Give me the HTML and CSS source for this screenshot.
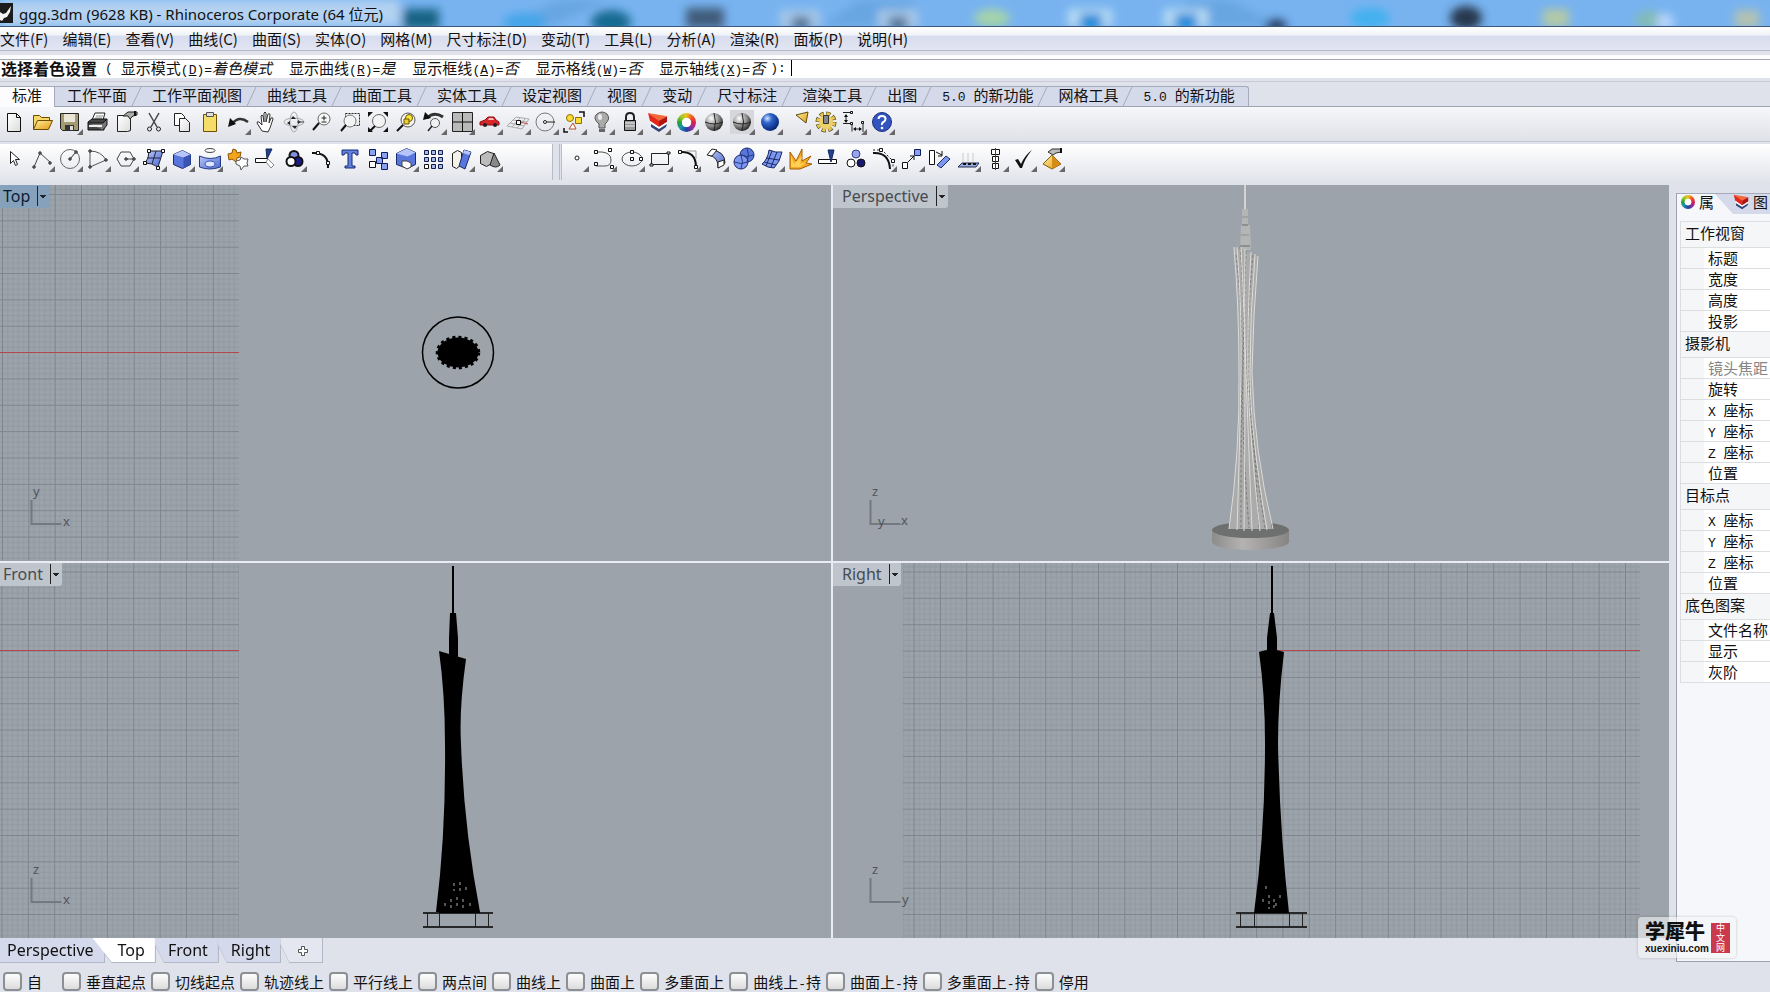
FILE: index.html
```
<!DOCTYPE html>
<html lang="zh-CN">

<head>
    <meta charset="UTF-8">
    <meta name="viewport" content="width=device-width, initial-scale=1.0">
    <title>ggg.3dm (9628 KB) - Rhinoceros Corporate (64 位元)</title>
    <link rel="stylesheet" href="styles.css">
</head>

<body>
    <!-- shared gradients and patterns -->
    <svg class="defs" width="0" height="0">
        <defs>
            <radialGradient id="gray_ball" cx="0.35" cy="0.3" r="0.75"><stop offset="0" stop-color="#fff"/><stop offset="0.5" stop-color="#999"/><stop offset="1" stop-color="#222"/></radialGradient>
            <radialGradient id="blue_ball" cx="0.35" cy="0.3" r="0.75"><stop offset="0" stop-color="#d5e6ff"/><stop offset="0.35" stop-color="#2f65cc"/><stop offset="1" stop-color="#03206f"/></radialGradient>
            <linearGradient id="blue" x1="0" y1="0" x2="1" y2="1"><stop offset="0" stop-color="#b9c8fa"/><stop offset="1" stop-color="#4a66cc"/></linearGradient>
            <linearGradient id="gold" x1="0" y1="0" x2="1" y2="1"><stop offset="0" stop-color="#fff0a0"/><stop offset="1" stop-color="#e09a10"/></linearGradient>
            <linearGradient id="paper" x1="0" y1="0" x2="1" y2="1"><stop offset="0" stop-color="#fff"/><stop offset="1" stop-color="#dcdcdc"/></linearGradient>
            <linearGradient id="stone" x1="0" y1="0" x2="1" y2="0"><stop offset="0" stop-color="#8c8c8c"/><stop offset="0.4" stop-color="#b5b3b1"/><stop offset="1" stop-color="#868584"/></linearGradient>
            <pattern id="grid_top" x="2" y="9" width="26.35" height="26.35" patternUnits="userSpaceOnUse">
                <path d="M5.8 0v27M11 0v27M16.3 0v27M21.6 0v27M0 5.8h27M0 11h27M0 16.3h27M0 21.6h27" stroke="#919aa1" stroke-width="1"/>
                <path d="M.5 0v27M0 .5h27" stroke="#7e858d" stroke-width="1"/>
            </pattern>
            <pattern id="grid_side" x="1.5" y="8.5" width="26.35" height="26.35" patternUnits="userSpaceOnUse">
                <path d="M5.8 0v27M11 0v27M16.3 0v27M21.6 0v27M0 5.8h27M0 11h27M0 16.3h27M0 21.6h27" stroke="#919aa1" stroke-width="1"/>
                <path d="M.5 0v27M0 .5h27" stroke="#7e858d" stroke-width="1"/>
            </pattern>
            <filter id="soft"><feGaussianBlur stdDeviation="5"/></filter>
        </defs>
    </svg>

    <div id="app">
        <header id="titlebar">
            <svg class="glass" viewBox="0 0 1770 26" preserveAspectRatio="none">
                <g filter="url(#soft)">
                    <path d="M0 0h400v26H0z" fill="#b4d2f1"/>
                    <path d="M560 0h50l-60 26h-50zM860 0h60l-40 26h-60zM1180 0h50l50 26h-70z" fill="#68a6e2"/>
                    <path d="M403 9h36v20h-36z" fill="#176384"/>
                    <ellipse cx="525" cy="22" rx="22" ry="9" fill="#42a5e9"/>
                    <ellipse cx="611" cy="22" rx="20" ry="12" fill="#156a91"/>
                    <path d="M686 8h38v20h-38z" fill="#405b7a"/>
                    <path d="M780 10h40v18h-40zM878 10h40v18h-40z" fill="#a8c8e8"/>
                    <path d="M792 17h18v12h-18zM889 17h18v12h-18z" fill="#506e90"/>
                    <ellipse cx="992" cy="18" rx="18" ry="9" fill="#a5d4a8"/>
                    <path d="M1068 9h44v18h-44zM1164 9h44v18h-44z" fill="#b8dcf4"/>
                    <path d="M1080 14h22v14h-22zM1175 14h22v14h-22z" fill="#0788d8"/>
                    <ellipse cx="1276" cy="26" rx="11" ry="7" fill="#263e65"/>
                    <ellipse cx="1370" cy="18" rx="20" ry="10" fill="#43b1ef"/>
                    <ellipse cx="1466" cy="18" rx="16" ry="12" fill="#27384e"/>
                    <path d="M1543 9h26v18h-26z" fill="#b4c9a6"/>
                    <ellipse cx="1650" cy="20" rx="15" ry="9" fill="#82bcb4"/>
                    <ellipse cx="1665" cy="22" rx="9" ry="9" fill="#b8d4fc"/>
                    <path d="M1735 10h24v18h-24z" fill="#b4c2b0"/>
                </g>
            </svg>
            <svg class="logo" width="13" height="20" viewBox="0 0 13 20"><path d="M0 0h13v20H0z" fill="#1b1b1b"/><path d="M0 9l3 2 3-1 5-7-1 6-3 5-3 1-2 3-2-1z" fill="#f4f4f4"/></svg>
            <h1>ggg.3dm (9628 KB) - Rhinoceros Corporate (64 位元)</h1>
        </header>

        <nav id="menubar">
            <button>文件(F)</button>
            <button>编辑(E)</button>
            <button>查看(V)</button>
            <button>曲线(C)</button>
            <button>曲面(S)</button>
            <button>实体(O)</button>
            <button>网格(M)</button>
            <button>尺寸标注(D)</button>
            <button>变动(T)</button>
            <button>工具(L)</button>
            <button>分析(A)</button>
            <button>渲染(R)</button>
            <button>面板(P)</button>
            <button>说明(H)</button>
        </nav>

        <div id="command">
            <label for="prompt">选择着色设置</label>
            <kbd class="open">(</kbd>
            <button>显示模式<kbd>(<u>D</u>)=</kbd><i>着色模式</i></button>
            <button>显示曲线<kbd>(<u>R</u>)=</kbd><i>是</i></button>
            <button>显示框线<kbd>(<u>A</u>)=</kbd><i>否</i></button>
            <button>显示格线<kbd>(<u>W</u>)=</kbd><i>否</i></button>
            <button>显示轴线<kbd>(<u>X</u>)=</kbd><i>否</i></button>
            <kbd class="close">):</kbd>
            <span class="caret"></span>
            <input id="prompt" type="text">
        </div>

        <nav id="tool_tabs">
            <button class="active">标准</button>
            <button>工作平面</button>
            <button>工作平面视图</button>
            <button>曲线工具</button>
            <button>曲面工具</button>
            <button>实体工具</button>
            <button>设定视图</button>
            <button>视图</button>
            <button>变动</button>
            <button>尺寸标注</button>
            <button>渲染工具</button>
            <button>出图</button>
            <button><kbd>5.0 </kbd>的新功能</button>
            <button>网格工具</button>
            <button><kbd>5.0 </kbd>的新功能</button>
        </nav>

        <div id="standard_bar" class="toolbar">
            <button aria-label="新建"><svg viewBox="0 0 24 24"><path d="M5.500 3.500h9l4 4v14h-13z" fill="url(#paper)" stroke="#111"/><path d="M14.500 3.500v4h4" fill="none" stroke="#111"/></svg></button>
            <button aria-label="打开"><svg viewBox="0 0 24 24"><path d="M3.500 19.500v-14h6l2 2h8v3" fill="#f7d766" stroke="#6b4c00"/><path d="M3.500 19.500l4-9h15l-4 9z" fill="url(#gold)" stroke="#6b4c00"/></svg></button>
            <button class="drop" aria-label="保存"><svg viewBox="0 0 24 24"><path d="M2.500 3.500h18v17h-16l-2-2z" fill="#a39972" stroke="#222"/><path d="M6 4h11v8H6z" fill="#e9e6d8"/><path d="M7 15h9v6H7z" fill="#333"/><path d="M12 16h3v4h-3z" fill="#ddd"/></svg></button>
            <button aria-label="打印"><svg viewBox="0 0 24 24"><path d="M6 10l3-7h10l-2 7z" fill="#fff" stroke="#222"/><path d="M10 6h7M9 8h7" stroke="#888"/><path d="M2 12l4-3h15l-3 4v7H2z" fill="#444" stroke="#111"/><path d="M2 13h15l4-4v6l-4 5" fill="#777" stroke="#111"/><path d="M3 16h13" stroke="#eee" stroke-width="2"/></svg></button>
            <button aria-label="文件属性"><svg viewBox="0 0 24 24"><path d="M3.500 5.500h13v15l-3 1h-10z" fill="url(#paper)" stroke="#222"/><path d="M9 6l5-4h9v3l-4 1-3 3-2-3z" fill="#aaa" stroke="#222"/><path d="M21 1v5" stroke="#111" stroke-width="2"/></svg></button>
            <button aria-label="剪切"><svg viewBox="0 0 24 24"><path d="M7 3l8 14M17 3L9 17" stroke="#444" stroke-width="1.500"/><circle cx="7.500" cy="19" r="2" fill="none" stroke="#222"/><circle cx="16.500" cy="19" r="2" fill="none" stroke="#222"/></svg></button>
            <button aria-label="复制"><svg viewBox="0 0 24 24"><path d="M4.500 3.500h7l3 3v9h-10z" fill="#fff" stroke="#222"/><path d="M9.500 8.500h6l4 4v9h-10z" fill="url(#paper)" stroke="#222"/></svg></button>
            <button aria-label="粘贴"><svg viewBox="0 0 24 24"><path d="M5.500 4.500h13v17h-13z" fill="#f6dc68" stroke="#6b5300"/><path d="M8.500 2.500h7v4h-7z" fill="#ddd" stroke="#555"/></svg></button>
            <button class="drop" aria-label="复原"><svg viewBox="0 0 24 24"><path d="M6 14Q13 5 22 12" fill="none" stroke="#333" stroke-width="2.500"/><path d="M2 17l2-9 6 6z" fill="#111"/></svg></button>
            <button aria-label="平移"><svg viewBox="0 0 24 24"><path d="M8 21L3 13q0-2 2-1l3 3-1-9q1-2 2 0l1 6 0-9q1-2 2 0v9l2-8q2-1 2 1l-1 8 2-5q2-1 2 1l-3 9-2 4z" fill="#fff" stroke="#333"/></svg></button>
            <button aria-label="旋转视图"><svg viewBox="0 0 24 24"><ellipse cx="12" cy="12" rx="10" ry="4" fill="none" stroke="#aaa"/><ellipse cx="12" cy="12" rx="4" ry="10" fill="none" stroke="#aaa"/><path d="M11 6l3 3h-5zM13 19l2-3h-5zM5 13l3-2v4zM19 12l-3-2v4z" fill="#222"/><path d="M15 12h7" stroke="#444"/></svg></button>
            <button aria-label="缩放"><svg viewBox="0 0 24 24"><circle cx="14" cy="9" r="6" fill="#f8f8f8" stroke="#666"/><path d="M11.500 8h5M14 5.500v5M11.500 12h5" stroke="#222"/><path d="M9 13l-6 7" stroke="#111" stroke-width="2"/></svg></button>
            <button aria-label="框选缩放"><svg viewBox="0 0 24 24"><path d="M7.500 3.500h14v12h-14z" fill="none" stroke="#222" stroke-dasharray="2 1"/><circle cx="12" cy="11" r="6" fill="#f3f3f3" stroke="#777"/><path d="M8 15l-5 6" stroke="#111" stroke-width="2"/></svg></button>
            <button aria-label="缩放至最大范围"><svg viewBox="0 0 24 24"><circle cx="13" cy="11" r="6.500" fill="#f3f3f3" stroke="#666"/><path d="M9 16l-5 5" stroke="#111" stroke-width="2"/><path d="M2 2h5l-5 5zM22 2h-5l5 5zM22 22h-5l5-5zM2 22v-5l5 5z" fill="#111"/></svg></button>
            <button aria-label="缩放至选取物件"><svg viewBox="0 0 24 24"><circle cx="14" cy="10" r="7" fill="#f3f3f3" stroke="#555"/><circle cx="15" cy="8" r="3.500" fill="#ffe936" stroke="#665500"/><path d="M10 9h5v5h-5z" fill="#eed030" stroke="#665500"/><path d="M9 15l-6 6" stroke="#111" stroke-width="2"/></svg></button>
            <button class="drop" aria-label="复原视图"><svg viewBox="0 0 24 24"><path d="M5 8Q12 1 21 7" fill="none" stroke="#333" stroke-width="3"/><path d="M1 10l2-8 6 6z" fill="#111"/><circle cx="13" cy="13" r="4.500" fill="#f3f3f3" stroke="#555"/><path d="M10 16l-4 5" stroke="#222" stroke-width="1.500"/></svg></button>
            <button class="drop" aria-label="四个视图"><svg viewBox="0 0 24 24"><path d="M2.500 2.500h20v19h-20z" fill="#b9b9b9" stroke="#222"/><path d="M12.500 2v20M2 12h21" stroke="#111"/></svg></button>
            <button class="drop" aria-label="车"><svg viewBox="0 0 24 24"><path d="M2 12l5-2 3-3h6l2 3 3 2v3H2z" fill="#d9262a" stroke="#8d0d12"/><path d="M10 10l1-2h4l1 2z" fill="#fbb"/><circle cx="7" cy="15" r="2" fill="#222"/><circle cx="17" cy="15" r="2" fill="#222"/></svg></button>
            <button class="drop" aria-label="工作平面"><svg viewBox="0 0 24 24"><path d="M1 16l9-9 13 2-7 10zM4 13l14 3M7 10l14 2M6 17l8-9M11 18l8-9" fill="none" stroke="#aaa"/><path d="M10 11l12 3" stroke="#c44"/><path d="M10.500 10.500h4v4h-4z" fill="#fff" stroke="#111"/></svg></button>
            <button class="drop" aria-label="圆"><svg viewBox="0 0 24 24"><circle cx="11" cy="12" r="9" fill="none" stroke="#777"/><path d="M11 12h10" stroke="#222"/><circle cx="11" cy="12" r="1.500" fill="#fff" stroke="#222"/></svg></button>
            <button class="drop" aria-label="选取"><svg viewBox="0 0 24 24"><path d="M2 18v4h4M17 2h5v5" fill="none" stroke="#111" stroke-width="1.500"/><circle cx="8" cy="8" r="3.500" fill="#fbdc35" stroke="#916f00"/><path d="M13.500 7.500h6v6h-6z" fill="#fbdc35" stroke="#916f00"/><path d="M7 19l4-6 3 6z" fill="#fff" stroke="#b44a22"/></svg></button>
            <button class="drop" aria-label="隐藏"><svg viewBox="0 0 24 24"><path d="M9 18v-4Q2 8 7 4q5-4 10 0 4 5-2 10v4z" fill="#aaa" stroke="#555"/><ellipse cx="10" cy="7" rx="2" ry="3" fill="#ececec"/><path d="M9 19h6v3H9z" fill="#666"/></svg></button>
            <button class="drop" aria-label="锁定"><svg viewBox="0 0 24 24"><path d="M8 11V7q0-4 4-4t4 4v4" fill="none" stroke="#222" stroke-width="2"/><path d="M6.500 10.500h11v10h-11z" fill="#999" stroke="#111"/><path d="M7 13h10M7 16h10" stroke="#eee"/></svg></button>
            <button class="drop" aria-label="图层"><svg viewBox="0 0 24 24"><path d="M2 3l18 3-7 6z" fill="#f4683a"/><path d="M2 3l11 8v6l-9-6z" fill="#e2281c"/><path d="M13 11l8-5v6l-8 5z" fill="#b31510"/><path d="M4 11l9 6 8-5v2l-8 5-8-5z" fill="#fff"/><path d="M5 14l8 5 8-5-1 3-7 5-8-5z" fill="#2f4578"/></svg></button>
            <button class="drop" aria-label="属性"><span class="ring"></span></button>
            <button aria-label="着色"><svg viewBox="0 0 24 24"><circle cx="12" cy="12" r="9" fill="url(#gray_ball)"/><path d="M3 12q9 4 18 0M12 3q3 9 0 18" fill="none" stroke="#222"/></svg></button>
            <button class="drop pressed" aria-label="着色模式"><svg viewBox="0 0 24 24"><circle cx="12" cy="12" r="9" fill="url(#gray_ball)"/><path d="M3 12q9 4 18 0M12 3q3 9 0 18" fill="none" stroke="#222"/></svg></button>
            <button class="drop" aria-label="渲染"><svg viewBox="0 0 24 24"><circle cx="12" cy="12" r="9" fill="url(#blue_ball)"/></svg></button>
            <button class="drop" aria-label="灯光"><svg viewBox="0 0 24 24"><path d="M10 5l12-3-2 11z" fill="url(#gold)" stroke="#5f4a10"/></svg></button>
            <button class="drop" aria-label="选项"><svg viewBox="0 0 24 24"><circle cx="12" cy="12" r="8" fill="none" stroke="#5b4c10" stroke-width="5" stroke-dasharray="4 2.280"/><circle cx="12" cy="12" r="8" fill="none" stroke="#eac951" stroke-width="3.500" stroke-dasharray="3 3.280" stroke-dashoffset="-0.500"/><circle cx="12" cy="12" r="7" fill="#ecd069"/><path d="M9.500 5.500h5v8h-5z" fill="#888" stroke="#333"/></svg></button>
            <button class="drop" aria-label="尺寸标注"><svg viewBox="0 0 24 24"><path d="M1 2.500h8M4 5v7M1 13.500h9v8M21 11v11M12 19h7" fill="none" stroke="#222"/><path d="M4 4l2 3H2zM4 13l2-3H2zM11 19l3-2v4zM20 19l-3-2v4z" fill="#111"/><path d="M8.500 1.500h2v2h-2zM8.500 12.500h2v2h-2zM19.500 11.500h2v2h-2z" fill="#fff" stroke="#111"/></svg></button>
            <button class="drop" aria-label="说明"><svg viewBox="0 0 24 24"><circle cx="12" cy="12" r="9.500" fill="#3154be" stroke="#1a2e80"/><path d="M8.500 9q0-3 3.500-3t3.500 3q0 2-2 3t-1.500 3" fill="none" stroke="#fff" stroke-width="2"/><circle cx="12" cy="18" r="1.300" fill="#fff"/></svg></button>
        </div>

        <div id="draw_bars">
            <div id="main_bar" class="toolbar">
                <button aria-label="选取"><svg viewBox="0 0 24 24"><path d="M8.500 4.500v12l3-3 2 5 2-1-2-5h4z" fill="#fff" stroke="#222"/></svg></button>
                <button class="drop" aria-label="多重直线"><svg viewBox="0 0 24 24"><path d="M4 20l6-14 11 10" fill="none" stroke="#444"/><path d="M3 19h2v2H3zM9 5h2v2H9zM19 15h2v2h-2z" fill="#fff" stroke="#111"/></svg></button>
                <button class="drop" aria-label="圆"><svg viewBox="0 0 24 24"><circle cx="12" cy="12" r="9.500" fill="none" stroke="#666"/><path d="M12 12l6-7" stroke="#222"/><path d="M11 11h2v2h-2zM17 4h2v2h-2z" fill="#fff" stroke="#111"/></svg></button>
                <button class="drop" aria-label="圆弧"><svg viewBox="0 0 24 24"><path d="M4 4v16l16-7Q15 4 4 4z" fill="none" stroke="#555"/><path d="M3 3h2v2H3zM3 19h2v2H3zM19 12h2v2h-2z" fill="#fff" stroke="#111"/></svg></button>
                <button class="drop" aria-label="多边形"><svg viewBox="0 0 24 24"><path d="M3 12l4-7h9l4 7-4 7H7zM12 12h8" fill="none" stroke="#444"/><path d="M11 11h2v2h-2zM19 11h2v2h-2z" fill="#fff" stroke="#111"/></svg></button>
                <button class="drop" aria-label="曲面"><svg viewBox="0 0 24 24"><path d="M7 4h14l-5 16q-6-4-13-4Q7 12 7 4z" fill="url(#blue)" stroke="#223"/><path d="M5 11h13M14 4l-4 13" stroke="#224"/><path d="M5.500 2.500h3v3h-3zM19.500 2.500h3v3h-3zM1.500 14.500h3v3h-3zM14.500 19.500h3v3h-3z" fill="#fff" stroke="#111"/></svg></button>
                <button class="drop" aria-label="立方体"><svg viewBox="0 0 24 24"><path d="M3.500 7.500l9-4 8 4v10l-8 4-9-4z" fill="#5876db" stroke="#1a2a66"/><path d="M3.500 7.500l9-4 8 4-7 3z" fill="#b6c5fa"/><path d="M13.500 10.500v11l7-4v-10z" fill="#3a54b4"/></svg></button>
                <button class="drop" aria-label="圆柱体"><svg viewBox="0 0 24 24"><ellipse cx="12" cy="3.500" rx="5" ry="2" fill="#fff" stroke="#444"/><path d="M1.500 9v11q10 4 21 0V9q-10 5-21 0z" fill="url(#blue)" stroke="#223a88"/><ellipse cx="12" cy="17" rx="5" ry="3" fill="#dde5ff" stroke="#3a54b4"/></svg></button>
                <button aria-label="组合"><svg viewBox="0 0 24 24"><path d="M2 7l4-1 1-4 3 1 1 3 4-1-1 5-3 1-1 4-4-3-3 1z" fill="#f2a51c" stroke="#8c5604"/><path d="M10 14l4-1 1-3 3 2 4 0-1 4 1 3-4 0-3 4-1-4-4-2z" fill="#fff" stroke="#555"/></svg></button>
                <button aria-label="修剪"><svg viewBox="0 0 24 24"><path d="M12 2h6l-5 10z" fill="#24408e" stroke="#15265b"/><path d="M1.500 11.500h12v4h-12z" fill="#fff" stroke="#111"/><path d="M14 12l6 6-3 3-5-6z" fill="#fff" stroke="#888"/></svg></button>
                <button class="drop" aria-label="群组"><svg viewBox="0 0 24 24"><circle cx="12" cy="8.500" r="4.500" fill="#7f90e0" stroke="#111" stroke-width="2"/><circle cx="16" cy="14.500" r="4.500" fill="#1c1c88" stroke="#111" stroke-width="2"/><circle cx="9" cy="14.500" r="4.500" fill="#fff" stroke="#111" stroke-width="2"/></svg></button>
                <button aria-label="编辑点"><svg viewBox="0 0 24 24"><path d="M2 6Q19 5 18 21" fill="none" stroke="#111" stroke-width="2"/><path d="M6.500 4.500h3v3h-3zM16.500 14.500h3v3h-3z" fill="#fff" stroke="#111"/></svg></button>
                <button aria-label="文字"><svg viewBox="0 0 24 24"><path d="M4 3h16v5h-2l-1-2h-3v13h3v2H7v-2h3V6H7L6 8H4z" fill="#6482dd" stroke="#152b78"/></svg></button>
                <button aria-label="移动"><svg viewBox="0 0 24 24"><path d="M3.500 2.500h6v6h-6zM15.500 5.500h6v6h-6zM10.500 10.500h6v6h-6zM15.500 16.500h6v6h-6z" fill="#8a9ff0" stroke="#111c5a"/><path d="M3.500 14.500h6v6h-6z" fill="#fff" stroke="#111"/></svg></button>
                <button class="drop" aria-label="布尔运算"><svg viewBox="0 0 24 24"><path d="M2.500 6.500l10-5 9 4v12l-8 4-11-4z" fill="#5876db" stroke="#1a2a66"/><path d="M2.500 6.500l10-5 9 4-8 4z" fill="#b6c5fa"/><path d="M8 14h5l4 2v4l-4 2-5-3z" fill="#fff" stroke="#444"/></svg></button>
                <button aria-label="阵列"><svg viewBox="0 0 24 24"><path d="M2.500 3.500h4v4h-4zM9.500 3.500h4v4h-4zM16.500 3.500h4v4h-4zM2.500 10.500h4v4h-4zM9.500 10.500h4v4h-4zM16.500 10.500h4v4h-4zM9.500 17.500h4v4h-4zM16.500 17.500h4v4h-4z" fill="#a8b8e8" stroke="#111c4a"/><path d="M2.500 17.500h4v4h-4z" fill="#fff" stroke="#111"/></svg></button>
                <button class="drop" aria-label="对齐"><svg viewBox="0 0 24 24"><path d="M2.500 6.500l5-3 4 2v12l-5 4-4-2z" fill="#f3f3ea" stroke="#222"/><path d="M14 3l7 2-6 17-6-3z" fill="#5876db" stroke="#1a2a66"/><path d="M14 3l7 2-2 3-6-2z" fill="#b6c5fa"/></svg></button>
                <button class="drop" aria-label="网格"><svg viewBox="0 0 24 24"><path d="M2.500 8.500l7-4 6 2v9l-7 4-6-3z" fill="#bbb" stroke="#222"/><path d="M16 6l6 12q-4 4-10 0z" fill="#888" stroke="#222"/></svg></button>
            </div>
            <div class="grip"></div>
            <div id="side_bar" class="toolbar">
                <button class="drop" aria-label="点"><svg viewBox="0 0 24 24"><circle cx="13" cy="11" r="2" fill="#fff" stroke="#222"/></svg></button>
                <button class="drop" aria-label="曲线"><svg viewBox="0 0 24 24"><path d="M4 5h6q9 1 9 8 0 6-6 6H4" fill="none" stroke="#555"/><path d="M2.500 3.500h3v3h-3zM16.500 1.500h3v3h-3zM2.500 15.500h3v3h-3zM18.500 18.500h3v3h-3z" fill="#fff" stroke="#111"/></svg></button>
                <button class="drop" aria-label="椭圆"><svg viewBox="0 0 24 24"><ellipse cx="12" cy="12" rx="10" ry="7" fill="none" stroke="#555"/><path d="M10.500 3.500h3v3h-3zM10.500 10.500h3v3h-3zM19.500 10.500h3v3h-3z" fill="#fff" stroke="#111"/></svg></button>
                <button class="drop" aria-label="矩形"><svg viewBox="0 0 24 24"><path d="M3.500 6.500h17v11h-17z" fill="none" stroke="#222"/><path d="M2 17h3v2H2zM19 5h3v2h-3z" fill="#fff" stroke="#111"/></svg></button>
                <button class="drop" aria-label="圆角"><svg viewBox="0 0 24 24"><path d="M4 5q16-1 16 15" fill="none" stroke="#111" stroke-width="2"/><path d="M10 4h10v8" fill="none" stroke="#999"/><path d="M2.500 3.500h3v3h-3zM18.500 18.500h3v3h-3z" fill="#fff" stroke="#111"/></svg></button>
                <button class="drop" aria-label="放样"><svg viewBox="0 0 24 24"><path d="M7 3q14 1 14 13l-7 5q1-11-10-13z" fill="url(#blue)" stroke="#222"/><path d="M3 8l5-6 5 1-5 6zM20 13v5l-6 3v-6z" fill="#fff" stroke="#222"/></svg></button>
                <button class="drop" aria-label="球体"><svg viewBox="0 0 24 24"><circle cx="15" cy="8" r="7" fill="#5876db" stroke="#1a2a66"/><circle cx="9" cy="15" r="7" fill="#7d97ee" stroke="#1a2a66"/><path d="M2 15q7 3 14 0M9 8q3 7 0 14M8 8q7 3 14 0M15 1q3 7 0 14" fill="none" stroke="#223a88"/></svg></button>
                <button class="drop" aria-label="曲面网格"><svg viewBox="0 0 24 24"><path d="M2 17Q8 12 9 3q7 3 13 2-2 10-8 16-6 0-12-4zM6 11l13 2M12 4L6 19M17 5l-6 15M4 15l12 3" fill="#7d97ee" stroke="#1a2a66"/></svg></button>
                <button aria-label="炸开"><svg viewBox="0 0 24 24"><path d="M2 5l6 9L14 2v12l9-5-5 7 6 1-12 5H2z" fill="#f7ab26" stroke="#a35d00"/><path d="M3 9l3 8 8-8-2 8 6-2-6 5H3z" fill="#ffd257"/></svg></button>
                <button aria-label="分割"><svg viewBox="0 0 24 24"><path d="M2.500 12.500h18v4h-18z" fill="#fff" stroke="#111"/><path d="M12 3h6l-3 12z" fill="#24408e" stroke="#15265b"/></svg></button>
                <button aria-label="群组"><svg viewBox="0 0 24 24"><circle cx="12" cy="7" r="4" fill="#9aa4e8" stroke="#33408c"/><circle cx="7" cy="16" r="4" fill="#fff" stroke="#111"/><circle cx="17" cy="16" r="4" fill="#17186c" stroke="#111"/></svg></button>
                <button class="drop" aria-label="控制点"><svg viewBox="0 0 24 24"><path d="M1 6q16-1 17 16" fill="none" stroke="#111" stroke-width="2"/><path d="M1 3h9l11 11v6" fill="none" stroke="#222" stroke-dasharray="2 2"/><path d="M7.500 1.500h3v3h-3zM19.500 12.500h3v3h-3z" fill="#fff" stroke="#111"/></svg></button>
                <button class="drop" aria-label="移动"><svg viewBox="0 0 24 24"><path d="M2.500 15.500h5v6h-5z" fill="#fff" stroke="#111"/><path d="M14.500 2.500h6v6h-6z" fill="#8a9ff0" stroke="#111c5a"/><path d="M8 15l6-6M10 9h4v4" fill="none" stroke="#111"/></svg></button>
                <button aria-label="旋转"><svg viewBox="0 0 24 24"><path d="M1.500 3.500h5v14h-5z" fill="#fff" stroke="#111"/><path d="M18 9l4 3-9 9-4-3z" fill="#7d97ee" stroke="#1a2a66"/><path d="M8 5l6 3M14 4v5h-4" fill="none" stroke="#111"/></svg></button>
                <button class="drop" aria-label="投影"><svg viewBox="0 0 24 24"><path d="M7 6v9M12 6v9M17 6v9" stroke="#ccc"/><path d="M2 20l4-4h17l-3 4z" fill="#9badde" stroke="#222c55"/><path d="M7 17h13" stroke="#111" stroke-dasharray="3 2" stroke-width="2"/></svg></button>
                <button class="drop" aria-label="对齐"><svg viewBox="0 0 24 24"><path d="M7.500 2.500h8v5h-8zM8.500 9.500h6v5h-6zM8.500 16.500h6v5h-6z" fill="#fff" stroke="#111"/><path d="M11.500 1v22" stroke="#d00"/></svg></button>
                <button class="drop" aria-label="检查"><svg viewBox="0 0 24 24"><path d="M3 13l3-1 3 5Q13 8 20 3q-7 8-10 18H8z" fill="#111"/></svg></button>
                <button class="drop" aria-label="属性"><svg viewBox="0 0 24 24"><path d="M3 17l9-9 9 9-9 5z" fill="url(#gold)" stroke="#815907"/><path d="M12 8v14l9-5z" fill="#d58c18"/><path d="M8 5l4-3h9v3l-5 1-3 2z" fill="#bbb" stroke="#333"/><path d="M21 1v5" stroke="#111" stroke-width="2"/></svg></button>
            </div>
        </div>

        <main id="work">
            <div id="left">
                <div id="viewports">
                    <section class="viewport">
                        <svg class="scene">
                            <rect width="239" height="100%" fill="url(#grid_top)"/>
                            <path d="M0 167.500h239" stroke="#b3474c"/>
                            <circle cx="458" cy="167.500" r="35.500" fill="none" stroke="#000" stroke-width="1.500"/>
                            <ellipse cx="458" cy="167.500" rx="20.500" ry="15"/>
                            <ellipse cx="458" cy="167.500" rx="20.500" ry="15" fill="none" stroke="#000" stroke-width="3.500" stroke-dasharray="3 3"/>
                            <g class="axis"><path d="M31.500 315v24h30"/><text x="33" y="311">y</text><text x="63" y="341">x</text></g>
                        </svg>
                        <button class="view_name active">Top</button>
                    </section>
                    <section class="viewport">
                        <svg class="scene">
                            <path d="M412 0v24" stroke="#d3d4d3" stroke-width="2"/>
                            <path d="M409 24h6v16h2l1 25h-11l1-25h1z" fill="#b4b6b5"/>
                            <path d="M409 40h6M407 61h10" stroke="#686b6b"/>
                            <path d="M408 50h8M409 32h6" stroke="#8f9292"/>
                            <path d="M379 344v13q2 7 38 8 37-1 39-8v-13z" fill="url(#stone)"/>
                            <ellipse cx="417.500" cy="345" rx="38.500" ry="8" fill="#6e7070"/>
                            <path d="M401 62l24 9q-5 60-6 116 2 80 20 157h-43q11-79 10-157 0-60-5-125z" fill="#aaabaa"/>
                            <path d="M403 70q7 60 6 120t-1 153M407 62q5 60 3 120t6 161M413 66q-3 80 2 140t17 137M420 70q-8 80-3 140t9 133" fill="none" stroke="#777978" stroke-dasharray="3 2"/>
                            <path d="M401 62q5 60 5 125 1 80-10 157M404 62q5 60 4 125t-4 158M408 62q4 70 4 130t-1 154M412 64q-1 70 1 125t6 157M418 67q-4 70-3 125t12 154M422 69q-5 60-5 118t17 158M425 71q-5 60-6 116 2 80 21 157" fill="none" stroke="#dcdcd8"/>
                        <g class="axis"><path d="M37.500 315v24h30"/><text x="39" y="311">z</text><text x="45" y="341">y</text><text x="68" y="340">x</text></g>
                        </svg>
                        <button class="view_name">Perspective</button>
                    </section>
                    <section class="viewport">
                        <svg class="scene">
                            <rect width="239" height="100%" fill="url(#grid_side)"/>
                            <path d="M0 87.500h239" stroke="#b3474c"/>
                            <path d="M452 3h2v47h2l2 25v20h-9V75l1-25h2z"/>
                            <path d="M439 88l27 8q-7 50-5 85 3 85 19 168h-44q10-80 9-168 0-50-6-93z"/>
                            <path d="M445 340v6M451 336v10M457 334v12M463 336v10M470 340v6M454 320v8M460 319v9M466 324v6" stroke="#a6acb0" stroke-dasharray="3 3"/>
                            <path d="M423 350h70M423 364h70M439 349h41" stroke="#000" stroke-width="1.500"/>
                            <path d="M427.500 350v14M439.500 350v14M475.500 350v14M488.500 350v14" stroke="#222"/>
                            <g class="axis"><path d="M31.500 315v24h30"/><text x="33" y="311">z</text><text x="63" y="341">x</text></g>
                        </svg>
                        <button class="view_name">Front</button>
                    </section>
                    <section class="viewport">
                        <svg class="scene">
                            <rect x="70" width="737" height="100%" fill="url(#grid_side)"/>
                            <path d="M439 87.500h368" stroke="#b3474c"/>
                            <path d="M438 3h2v47h1l3 25v15h-10V75l3-25h1z"/>
                            <path d="M426 89q12-5 25 0-6 50-6 92 2 90 11 169h-35q11-80 11-169 0-50-6-92z"/>
                            <path d="M430 336v6M436 332v14M441 336v10M447 332v6M433 323v4M443 340v6" stroke="#a6acb0" stroke-dasharray="3 3"/>
                            <path d="M403 350h71M403 364h71" stroke="#000" stroke-width="1.500"/>
                            <path d="M407.500 350v14M421.500 350v14M456.500 350v14M469.500 350v14" stroke="#222"/>
                            <g class="axis"><path d="M37.500 315v24h30"/><text x="39" y="311">z</text><text x="69" y="341">y</text></g>
                        </svg>
                        <button class="view_name">Right</button>
                    </section>
                </div>
                <nav id="view_tabs">
                    <button>Perspective</button>
                    <button class="active">Top</button>
                    <button>Front</button>
                    <button>Right</button>
                    <button class="add" aria-label="新增"><svg width="10" height="10" viewBox="0 0 10 10"><path d="M3.500.500h3v3h3v3h-3v3h-3v-3h-3v-3h3z" fill="#fff" stroke="#555"/></svg></button>
                </nav>
            </div>

            <aside id="panel">
                <nav id="panel_tabs">
                    <button class="active"><span class="ring small"></span>属</button>
                    <button><svg width="16" height="16" viewBox="1 2 21 21"><path d="M2 3l18 3-7 6z" fill="#f4683a"/><path d="M2 3l11 8v6l-9-6z" fill="#e2281c"/><path d="M13 11l8-5v6l-8 5z" fill="#b31510"/><path d="M4 11l9 6 8-5v2l-8 5-8-5z" fill="#fff"/><path d="M5 14l8 5 8-5-1 3-7 5-8-5z" fill="#2f4578"/></svg>图</button>
                </nav>
                <table>
                    <tr><th colspan="2">工作视窗</th></tr>
                    <tr><td></td><td>标题</td></tr>
                    <tr><td></td><td>宽度</td></tr>
                    <tr><td></td><td>高度</td></tr>
                    <tr><td></td><td>投影</td></tr>
                    <tr><th colspan="2">摄影机</th></tr>
                    <tr><td></td><td class="off">镜头焦距</td></tr>
                    <tr><td></td><td>旋转</td></tr>
                    <tr><td></td><td><kbd>X </kbd>座标</td></tr>
                    <tr><td></td><td><kbd>Y </kbd>座标</td></tr>
                    <tr><td></td><td><kbd>Z </kbd>座标</td></tr>
                    <tr><td></td><td>位置</td></tr>
                    <tr><th colspan="2">目标点</th></tr>
                    <tr><td></td><td><kbd>X </kbd>座标</td></tr>
                    <tr><td></td><td><kbd>Y </kbd>座标</td></tr>
                    <tr><td></td><td><kbd>Z </kbd>座标</td></tr>
                    <tr><td></td><td>位置</td></tr>
                    <tr><th colspan="2">底色图案</th></tr>
                    <tr><td></td><td>文件名称</td></tr>
                    <tr><td></td><td>显示</td></tr>
                    <tr><td></td><td>灰阶</td></tr>
                </table>
            </aside>
        </main>

        <footer id="osnap">
            <label class="auto"><input type="checkbox"><span>自</span></label>
            <label><input type="checkbox"><span>垂直起点</span></label>
            <label><input type="checkbox"><span>切线起点</span></label>
            <label><input type="checkbox"><span>轨迹线上</span></label>
            <label><input type="checkbox"><span>平行线上</span></label>
            <label><input type="checkbox"><span>两点间</span></label>
            <label><input type="checkbox"><span>曲线上</span></label>
            <label><input type="checkbox"><span>曲面上</span></label>
            <label><input type="checkbox"><span>多重面上</span></label>
            <label><input type="checkbox"><span>曲线上<kbd>-</kbd>持</span></label>
            <label><input type="checkbox"><span>曲面上<kbd>-</kbd>持</span></label>
            <label><input type="checkbox"><span>多重面上<kbd>-</kbd>持</span></label>
            <label><input type="checkbox"><span>停用</span></label>
        </footer>

        <div id="watermark">
            <div class="brand"><b>学犀牛</b><span>xuexiniu.com</span></div>
            <div class="stamp">中文网</div>
        </div>
    </div>
</body>

</html>
```
FILE: styles.css
```
* {
    box-sizing: border-box;
}

body {
    margin: 0;
    overflow: hidden;
    font-family: "Noto Sans", "Noto Sans CJK SC", sans-serif;
    font-size: 15px;
    color: #111;
}

button {
    border: 0;
    padding: 0;
    background: none;
    font: inherit;
    color: inherit;
    white-space: nowrap;
}

kbd {
    font-family: "Liberation Mono", monospace;
    font-size: 13px;
    line-height: 1;
    white-space: pre;
}

.defs {
    position: absolute;
}

#app {
    position: relative;
    display: flex;
    flex-direction: column;
    height: 100vh;
    background: #dfe2eb;
}

/* title */
#titlebar {
    position: relative;
    display: flex;
    align-items: center;
    gap: 6px;
    height: 27px;
    background: #78b3f0;
    border-bottom: 1px solid #3c5878;
}

.glass {
    position: absolute;
    left: 0;
    top: 0;
    width: 100%;
    height: 26px;
}

.logo, #titlebar h1 {
    position: relative;
}

#titlebar h1 {
    margin: 0;
    font-size: 15px;
    font-weight: normal;
}

#menubar {
    display: flex;
    gap: 14px;
    height: 24px;
    font-family: "Noto Sans CJK SC", sans-serif;
    line-height: 24px;
    background: linear-gradient(#fff, #eff2f8 35%, #d7dcee 40%, #e2e5f2);
    border-bottom: 1px solid #b5b9c6;
}

/* command line */
#command {
    display: flex;
    align-items: center;
    height: 19px;
    margin-top: 8px;
    padding: 0 0 2px 1px;
    font-family: "Noto Sans CJK SC", sans-serif;
    line-height: 18px;
    background: #fff;
    border-top: 1px solid #a3a6ae;
    box-shadow: 0 -4px #fdfdfe;
}

#command label {
    font-size: 16px;
    font-weight: bold;
}

#command button {
    margin-right: 17px;
}

#command .open {
    margin: 0 8px;
}

#command .close {
    margin-left: -12px;
}

#command .caret {
    width: 1px;
    height: 16px;
    margin-left: 5px;
    background: #000;
}

#command input {
    flex: 1;
    min-width: 0;
    height: 16px;
    padding: 0;
    border: 0;
    outline: 0;
}

/* toolbar group tabs */
#tool_tabs {
    display: flex;
    height: 29px;
    padding-top: 8px;
    font-family: "Noto Sans CJK SC", sans-serif;
    background: linear-gradient(#dfe2eb 3px, #c5cad5 3px, #c5cad5 4px, #dfe2eb 4px);
    border-bottom: 1px solid #9da4b0;
}

#tool_tabs button {
    position: relative;
    padding: 0 9px 4px 16px;
    line-height: 15px;
    background: #d5daea;
    border-top: 1px solid #a5abba;
}

#tool_tabs button::before {
    content: "";
    position: absolute;
    left: 0;
    top: 0;
    bottom: 0;
    border-left: 1px solid #a5abba;
    transform: skewX(-25deg);
}

#tool_tabs button.active {
    height: 21px;
    padding: 0 12px 5px 12px;
    background: #fcfcfe;
    border-right: 1px solid #a5abba;
}

#tool_tabs button.active::before, #tool_tabs button.active + button::before {
    display: none;
}

#tool_tabs button.active + button {
    padding-left: 12px;
}

#tool_tabs button:last-child {
    padding-right: 13px;
    border-right: 1px solid #a5abba;
    border-top-right-radius: 3px;
}

/* toolbars */
.toolbar {
    display: flex;
    gap: 4px;
    padding-left: 2px;
}

.toolbar button {
    position: relative;
    width: 24px;
    height: 24px;
}

.toolbar svg {
    display: block;
    width: 24px;
    height: 24px;
}

.toolbar .drop::after {
    content: "";
    position: absolute;
    right: -1px;
    bottom: -1px;
    border-left: 6px solid transparent;
    border-bottom: 6px solid #686868;
}

.toolbar .pressed {
    background: #d5d7dc;
}

#standard_bar {
    height: 35px;
    padding-top: 3px;
    background: linear-gradient(#f6f7f9, #dfe1e8);
    border-bottom: 1px solid #c3c8d1;
}

#draw_bars {
    display: flex;
    height: 41px;
    margin-top: 2px;
    background: linear-gradient(#fff, #dfe1e9);
}

#draw_bars .toolbar {
    padding-top: 3px;
}

#main_bar {
    width: 552px;
}

.grip {
    width: 10px;
    margin-bottom: 5px;
    background: #dfe2eb;
    border-left: 1px solid #b7bcc8;
    border-right: 3px double #b7bcc8;
}

.ring {
    display: block;
    width: 19px;
    height: 19px;
    margin: 0 auto;
    border-radius: 50%;
    background: radial-gradient(#fff 32%, transparent 38%), conic-gradient(#e8c322, #ef5a22, #d91f50, #8d2fa0, #243fa0, #1791b0, #27a03c, #9dc828, #e8c322);
}

.ring.small {
    width: 14px;
    height: 14px;
    margin: 0;
}

/* work area */
#work {
    flex: 1;
    display: flex;
    min-height: 0;
}

#left {
    flex: 1;
    display: flex;
    flex-direction: column;
    min-width: 0;
}

#viewports {
    flex: 1;
    display: grid;
    grid-template-columns: 831fr 836fr;
    grid-template-rows: 1fr 1fr;
    gap: 2px;
    background: #e9ecf4;
}

.viewport {
    position: relative;
    overflow: hidden;
    background: #9ca3ab;
}

.scene {
    position: absolute;
    width: 100%;
    height: 100%;
}

.axis path {
    fill: none;
    stroke: #737981;
    stroke-width: 2;
}

.axis text {
    font-size: 13px;
    fill: #50555c;
}

.view_name {
    position: absolute;
    left: 0;
    top: 0;
    display: flex;
    align-items: center;
    gap: 7px;
    height: 23px;
    padding: 0 2px 1px 9px;
    font-size: 16px;
    color: #474b50;
    background: #bfc5cc;
    border-radius: 0 0 3px 0;
}

.viewport:nth-child(odd) .view_name {
    padding-left: 3px;
}

.view_name.active {
    color: #0c1c30;
    background: #86a1bb;
}

/* divider and arrow */
.view_name::after {
    content: "";
    width: 9px;
    height: 20px;
    border-left: 1px solid #222;
    background: linear-gradient(#222, #222) 2px 9px / 6px 1px no-repeat,
        linear-gradient(#222, #222) 3px 10px / 4px 1px no-repeat,
        linear-gradient(#222, #222) 4px 11px / 2px 1px no-repeat;
}

#view_tabs {
    display: flex;
    height: 25px;
    font-size: 16px;
    filter: drop-shadow(1px 0 0 #b3b8c8) drop-shadow(0 1px 0 #b3b8c8);
}

#view_tabs button {
    height: 24px;
    padding: 0 10px 0 13px;
    background: #d4daec;
    clip-path: polygon(0 0, 100% 0, 100% 100%, 9px 100%, 0 6px);
}

#view_tabs button:first-child {
    padding-left: 7px;
    clip-path: none;
}

#view_tabs .active {
    margin-left: -11px;
    padding-left: 25px;
    background: #fff;
    clip-path: polygon(0 0, 100% 0, 100% 100%, 19px 100%);
}

#view_tabs .add {
    padding: 0 14px 0 18px;
    background: #e4e7f0;
}

/* properties panel */
#panel {
    width: 94px;
    margin: 8px 0 1px 7px;
    overflow: hidden;
    background: #f6f7fa;
    border-left: 1px solid #9ba1ad;
    border-bottom: 1px solid #9ba1ad;
    font-family: "Noto Sans CJK SC", sans-serif;
}

#panel_tabs {
    display: flex;
    height: 21px;
    background: #d5daea;
    border-top: 1px solid #a5abba;
}

#panel_tabs button {
    display: flex;
    align-items: center;
    gap: 4px;
    padding-bottom: 4px;
    line-height: 16px;
}

#panel_tabs .active {
    width: 56px;
    padding-left: 4px;
    background: #f6f7fa;
    clip-path: polygon(0 0, 38px 0, 100% 100%, 0 100%);
}

#panel table {
    width: 140px;
    margin: 7px 0 0 3px;
    border-collapse: separate;
    border-spacing: 0;
    border-left: 1px solid #dcdee2;
    border-top: 1px solid #dcdee2;
}

#panel th, #panel td {
    line-height: 18px;
    text-align: left;
    white-space: nowrap;
    border-bottom: 1px solid #dcdee2;
}

#panel th {
    height: 26px;
    padding: 0 0 3px 4px;
    font-weight: normal;
    background: #f5f6f8;
}

#panel td {
    height: 21px;
    padding: 0 0 0 4px;
    background: #fff;
}

#panel td:first-child {
    width: 23px;
    padding: 0;
    background: #f5f6f8;
}

#panel .off {
    color: #858585;
}

/* object snaps */
#osnap {
    display: flex;
    gap: 5px;
    height: 29px;
    padding: 9px 0 0 3px;
    font-family: "Noto Sans CJK SC", sans-serif;
    line-height: 19px;
}

#osnap label {
    display: flex;
    align-items: center;
    gap: 5px;
    height: 19px;
    white-space: nowrap;
}

#osnap .auto {
    margin-right: 15px;
}

#osnap input {
    appearance: none;
    width: 19px;
    height: 19px;
    margin: 0;
    border: 2px solid #8c8f94;
    border-radius: 4px;
    background: linear-gradient(#fdfdfd, #dcdcdc);
}

#watermark {
    position: absolute;
    right: 34px;
    bottom: 34px;
    display: flex;
    align-items: center;
    gap: 3px;
    height: 41px;
    padding: 0 6px 0 7px;
    border-radius: 4px;
    background: rgba(245, 245, 245, 0.6);
    box-shadow: 0 0 3px rgba(0, 0, 0, 0.2);
    font-family: "Noto Sans CJK SC", sans-serif;
}

.brand {
    display: flex;
    flex-direction: column;
    width: 63px;
}

.brand b {
    font-size: 20px;
    font-weight: 900;
    line-height: 23px;
}

.brand span {
    font-family: "Liberation Sans", sans-serif;
    font-size: 10px;
    font-weight: bold;
    line-height: 14px;
}

.stamp {
    width: 19px;
    height: 30px;
    padding: 0 5px;
    color: #fff;
    font-size: 9px;
    line-height: 10px;
    background: #cb3a4c;
}
```
